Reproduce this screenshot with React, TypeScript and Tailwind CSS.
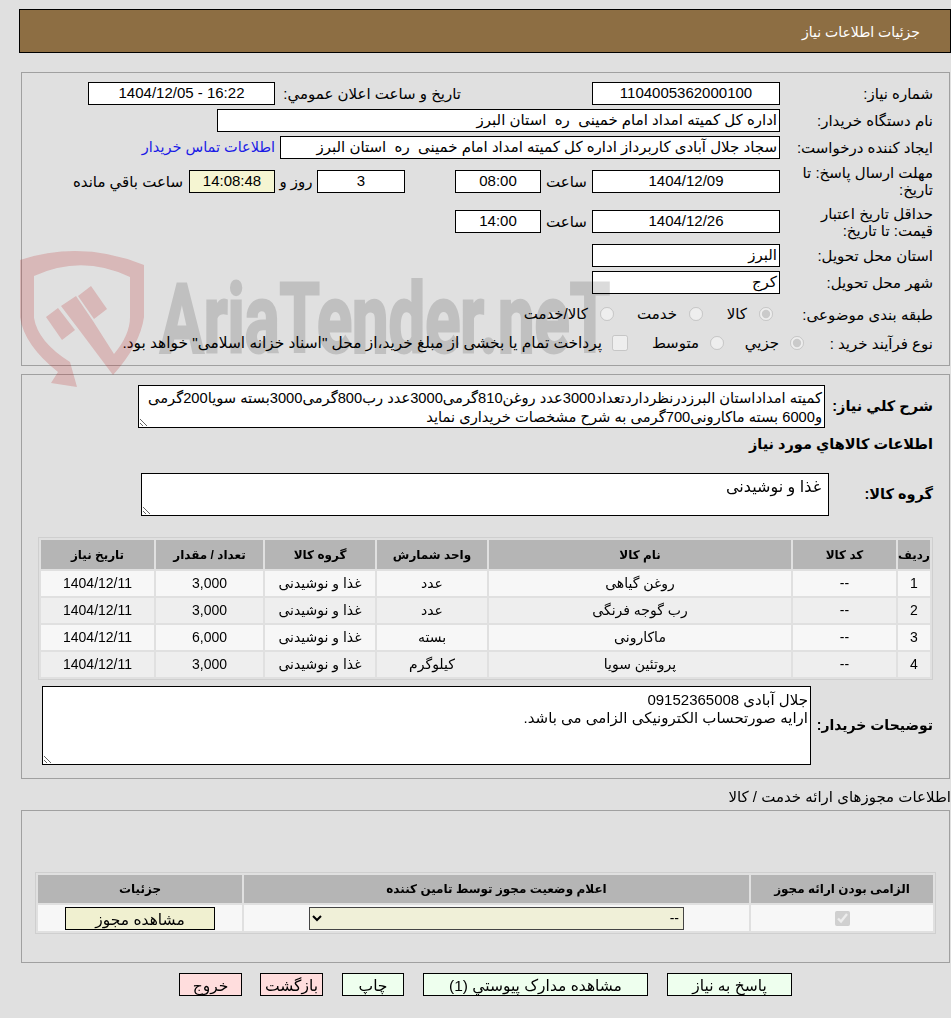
import type { ReactNode } from "react";

const rows = [
  { id: 1, name: "روغن گیاهی", unit: "عدد", qty: "3,000" },
  { id: 2, name: "رب گوجه فرنگی", unit: "عدد", qty: "3,000" },
  { id: 3, name: "ماکارونی", unit: "بسته", qty: "6,000" },
  { id: 4, name: "پروتئین سویا", unit: "کیلوگرم", qty: "3,000" },
];

function Box({ className, children }: { className: string; children?: ReactNode }) {
  return <div className={"flex h-[23px] shrink-0 items-center whitespace-pre border border-black " + className}>{children}</div>;
}

function Label({ className, children }: { className: string; children: ReactNode }) {
  return <div className={"shrink-0 leading-[17px] " + className}>{children}</div>;
}

function Radio({ checked }: { checked?: boolean }) {
  return <input type="radio" disabled defaultChecked={checked} className="m-0 h-[14px] w-[14px] shrink-0" />;
}

function Note({ className, text }: { className: string; text: string }) {
  return (
    <textarea
      readOnly
      defaultValue={text}
      className={"block shrink-0 border border-black bg-white px-[2px] text-black outline-none " + className}
    />
  );
}

function ActionButton({ className, children }: { className: string; children: ReactNode }) {
  return <button className={"h-[23px] shrink-0 border border-black text-center text-[15.5px] " + className}>{children}</button>;
}

function Watermark() {
  return (
    <svg className="pointer-events-none absolute left-0 top-0 z-10" width="951" height="400" viewBox="0 0 951 400">
      <g fill="#b91919" opacity="0.2">
        <path d="M20 260 Q82 240 144 265 L144 317 Q140 345 113 375 L80 331 L61 306 L76 296 L93 321 L114 354 Q130 335 130 317 L130 277 Q82 254 34 276 L34 318 Q38 342 70 362 L77 387 L51 383 L58 372 Q24 345 20 317 Z" />
        <path d="M46 317 L58 308 L75 330 L62 340 Z" />
        <path d="M78 296 L91 286 L107 309 L94 319 Z" />
      </g>
      <text
        x="160"
        y="352"
        textLength="450"
        lengthAdjust="spacingAndGlyphs"
        textAnchor="start"
        fill="#000000"
        stroke="#000000"
        strokeWidth="3"
        opacity="0.14"
        fontFamily="Roboto, sans-serif"
        fontWeight="700"
        fontSize="97"
        className="[direction:ltr]"
      >
        AriaTender.neT
      </text>
    </svg>
  );
}

export default function App() {
  return (
    <div dir="rtl" className="relative h-[1018px] w-[951px] overflow-hidden bg-[#e0e0e0] text-[15px] text-black [font-family:'Liberation_Sans','DejaVu_Sans',sans-serif]">
      <Watermark />

      <div className="ml-[19px] mt-[9px] flex h-[44px] items-center border border-black bg-[#8d6e43] pr-[30px] pt-[2px] text-[14px] text-white">
        جزئیات اطلاعات نیاز
      </div>

      <section className="ml-[21px] mr-px mt-[19px] border border-[#a0a0a0] pb-[12px] pr-[16px] pt-[9px]">
        <div className="flex items-center">
          <Label className="w-[153px]">شماره نیاز:</Label>
          <Box className="w-[188px] justify-center bg-white">1104005362000100</Box>
          <Label className="mr-[131px] w-[181px]">تاریخ و ساعت اعلان عمومي:</Label>
          <Box className="mr-[5px] w-[187px] justify-center bg-white">16:22 - 1404/12/05</Box>
        </div>
        <div className="mt-[4px] flex items-center">
          <Label className="w-[153px]">نام دستگاه خریدار:</Label>
          <Box className="w-[563px] bg-white pr-[2px]">اداره کل کمیته امداد امام خمینی  ره  استان البرز</Box>
        </div>
        <div className="mt-[4px] flex items-center">
          <Label className="w-[153px]">ایجاد کننده درخواست:</Label>
          <Box className="w-[500px] bg-white pr-[2px]">سجاد جلال آبادی کاربرداز اداره کل کمیته امداد امام خمینی  ره  استان البرز</Box>
          <Label className="mr-[5px] text-[14.5px] text-[#1a1ae6]">اطلاعات تماس خریدار</Label>
        </div>
        <div className="mt-[5px] flex h-[34px] items-center">
          <Label className="w-[153px]">
            مهلت ارسال پاسخ: تا
            <br />
            تاریخ:
          </Label>
          <Box className="w-[188px] justify-center bg-white">1404/12/09</Box>
          <Label className="w-[51px] text-center">ساعت</Label>
          <Box className="w-[86px] justify-center bg-white">08:00</Box>
          <Box className="mr-[50px] w-[88px] justify-center bg-white">3</Box>
          <Label className="w-[42px] text-center">روز و</Label>
          <Box className="w-[86px] justify-center bg-[#f5f5d2]">14:08:48</Box>
          <Label className="mr-[6px]">ساعت باقي مانده</Label>
        </div>
        <div className="mt-[6px] flex h-[35px] items-center">
          <Label className="w-[153px]">
            حداقل تاریخ اعتبار
            <br />
            قیمت: تا تاریخ:
          </Label>
          <Box className="w-[188px] justify-center bg-white">1404/12/26</Box>
          <Label className="w-[51px] text-center">ساعت</Label>
          <Box className="w-[86px] justify-center bg-white">14:00</Box>
        </div>
        <div className="mt-[5px] flex items-center">
          <Label className="w-[153px]">استان محل تحویل:</Label>
          <Box className="w-[188px] bg-white pr-[2px]">البرز</Box>
        </div>
        <div className="mt-[4px] flex items-center">
          <Label className="w-[153px]">شهر محل تحویل:</Label>
          <Box className="w-[188px] bg-white pr-[2px]">کرج</Box>
        </div>
        <div className="mt-[10px] flex h-[20px] items-center">
          <Label className="w-[160px]">طبقه بندی موضوعی:</Label>
          <div className="flex w-[70px] items-center gap-[12px]">
            <Radio checked />
            <span>کالا</span>
          </div>
          <div className="flex w-[89px] items-center gap-[12px]">
            <Radio />
            <span>خدمت</span>
          </div>
          <div className="flex items-center gap-[12px]">
            <Radio />
            <span>کالا/خدمت</span>
          </div>
        </div>
        <div className="mt-[9px] flex h-[20px] items-center">
          <Label className="w-[129px]">نوع فرآیند خرید :</Label>
          <div className="flex w-[80px] items-center gap-[11px]">
            <Radio checked />
            <span>جزیي</span>
          </div>
          <div className="flex w-[96px] items-center gap-[11px]">
            <Radio />
            <span>متوسط</span>
          </div>
          <div className="flex items-center gap-[10px]">
            <input type="checkbox" disabled className="m-0 h-[16px] w-[16px] shrink-0" />
            <span className="text-[15.4px]">پرداخت تمام یا بخشی از مبلغ خرید،از محل "اسناد خزانه اسلامی" خواهد بود.</span>
          </div>
        </div>
      </section>

      <section className="ml-[21px] mr-px mt-[8px] border border-[#a0a0a0] pb-[13px] pr-[16px] pt-[10px]">
        <div className="flex items-center">
          <Label className="w-[108px] whitespace-nowrap text-[14.5px] font-bold">شرح کلي نیاز:</Label>
          <Note
            className="h-[43px] w-[687px] py-[3px] text-[14.7px] leading-[19px]"
            text="کمیته امداداستان البرزدرنظرداردتعداد3000عدد روغن810گرمی3000عدد رب800گرمی3000بسته سویا200گرمی و6000 بسته ماکارونی700گرمی به شرح مشخصات خریداری نماید"
          />
        </div>
        <div className="mt-[6px] h-[20px] text-[14.5px] font-bold leading-[20px]">اطلاعات کالاهاي مورد نیاز</div>
        <div className="mt-[19px] flex items-center">
          <Label className="w-[104px] whitespace-nowrap text-[14.5px] font-bold">گروه کالا:</Label>
          <Note className="h-[43px] w-[688px] py-[4px] pr-[7px] text-[16px] leading-[18px]" text="غذا و نوشیدنی" />
        </div>

        <table className="mt-[21px] w-[895px] table-fixed border-separate border-spacing-[2px] border border-[#cfcfcf] text-center text-[14px]">
          <colgroup>
            <col className="w-[32px]" />
            <col className="w-[103px]" />
            <col className="w-[302px]" />
            <col className="w-[110px]" />
            <col className="w-[110px]" />
            <col className="w-[107px]" />
            <col className="w-[113px]" />
          </colgroup>
          <thead>
            <tr className="h-[29px] bg-[#b5b5b5] text-[12px] font-bold">
              <th>ردیف</th>
              <th>کد کالا</th>
              <th>نام کالا</th>
              <th>واحد شمارش</th>
              <th>گروه کالا</th>
              <th>تعداد / مقدار</th>
              <th>تاریخ نیاز</th>
            </tr>
          </thead>
          <tbody>
            {rows.map((row) => (
              <tr key={row.id} className={row.id % 2 ? "h-[25px] bg-[#f7f7f7]" : "h-[25px] bg-[#eeeeee]"}>
                <td>{row.id}</td>
                <td>--</td>
                <td>{row.name}</td>
                <td>{row.unit}</td>
                <td>غذا و نوشیدنی</td>
                <td>{row.qty}</td>
                <td>1404/12/11</td>
              </tr>
            ))}
          </tbody>
        </table>

        <div className="mt-[6px] flex items-center">
          <Label className="w-[122px] whitespace-nowrap text-[14px] font-bold">توضیحات خریدار:</Label>
          <Note className="h-[79px] w-[769px] py-[4px] text-[15px] leading-[18px]" text={"جلال آبادی 09152365008\nارایه صورتحساب الکترونیکی الزامی می باشد."} />
        </div>
      </section>

      <div className="mt-[8px] h-[20px] leading-[20px]">اطلاعات مجوزهای ارائه خدمت / کالا</div>

      <section className="ml-[21px] mr-px mt-[3px] border border-[#a0a0a0] pb-[28px] pr-[13px] pt-[61px]">
        <table className="w-[901px] table-fixed border-separate border-spacing-[2px] border border-[#cfcfcf] text-center">
          <colgroup>
            <col className="w-[182px]" />
            <col className="w-[505px]" />
            <col className="w-[204px]" />
          </colgroup>
          <thead>
            <tr className="h-[28px] bg-[#b5b5b5] text-[12px] font-bold">
              <th>الزامی بودن ارائه مجوز</th>
              <th>اعلام وضعیت مجوز توسط تامین کننده</th>
              <th>جزئیات</th>
            </tr>
          </thead>
          <tbody>
            <tr className="h-[26px] bg-[#f7f7f7]">
              <td>
                <input type="checkbox" checked readOnly disabled className="m-0 h-[15px] w-[15px] align-middle" />
              </td>
              <td>
                <select className="mr-[65px] block h-[23px] w-[375px] border border-[#444444] bg-[#f0f0d8] text-[14px]">
                  <option>--</option>
                </select>
              </td>
              <td>
                <button className="mx-auto block h-[23px] w-[150px] border border-black bg-[#f0f0d0] text-[15.5px]">مشاهده مجوز</button>
              </td>
            </tr>
          </tbody>
        </table>
      </section>

      <div className="mt-[10px] flex gap-[19px] pr-[159px]">
        <ActionButton className="w-[125px] bg-[#eeffee]">پاسخ به نیاز</ActionButton>
        <ActionButton className="w-[225px] bg-[#eeffee]">مشاهده مدارک پیوستي (1)</ActionButton>
        <ActionButton className="w-[62px] bg-[#eeffee]">چاپ</ActionButton>
        <ActionButton className="w-[63px] bg-[#ffdddd]">بازگشت</ActionButton>
        <ActionButton className="-mr-px w-[63px] bg-[#ffdddd]">خروج</ActionButton>
      </div>
    </div>
  );
}
